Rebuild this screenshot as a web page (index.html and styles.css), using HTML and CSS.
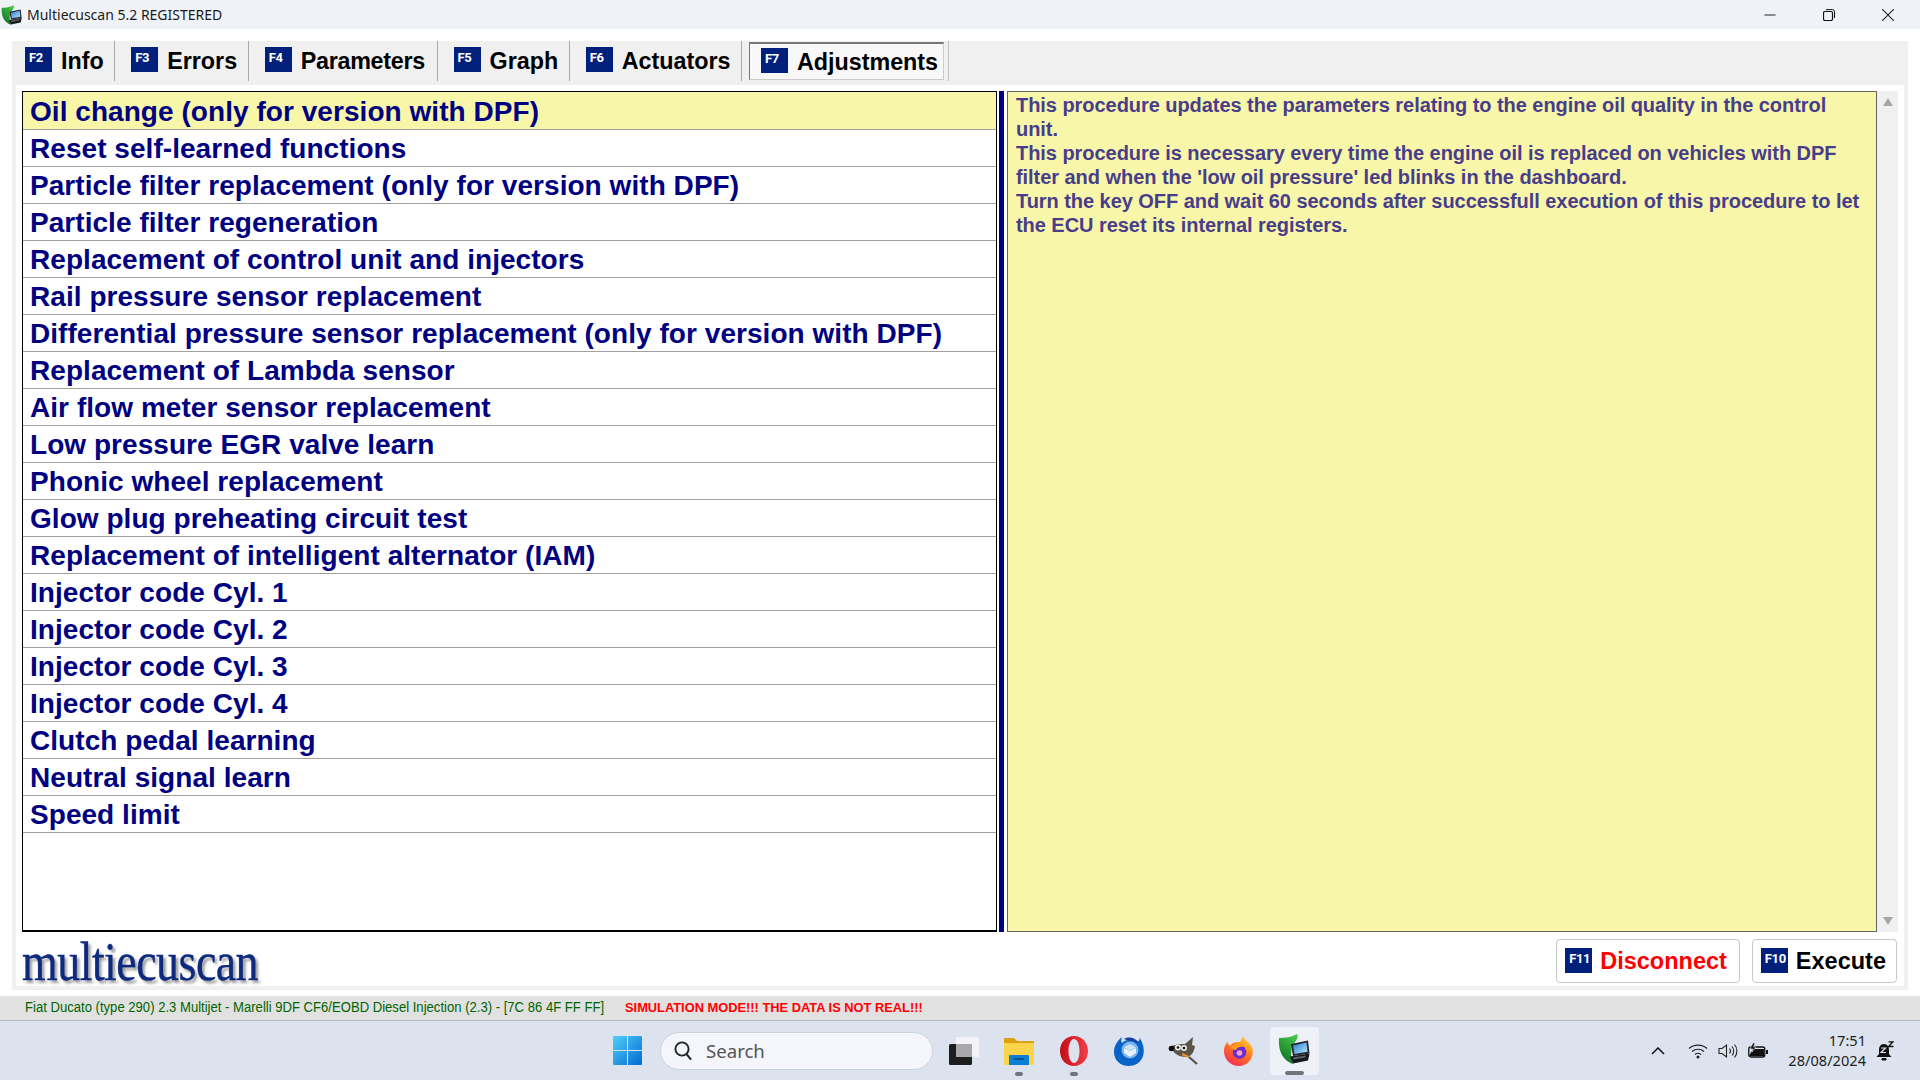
FILE: index.html
```html
<!DOCTYPE html>
<html lang="en">
<head>
<meta charset="utf-8">
<title>Multiecuscan 5.2 REGISTERED</title>
<link rel="stylesheet" href="styles.css">
</head>
<body>
<svg class="defs" width="0" height="0" aria-hidden="true">
  <defs>
    <linearGradient id="leaf" x1="0.7" y1="0" x2="0.2" y2="1"><stop offset="0" stop-color="#46c646"/><stop offset="1" stop-color="#0c6b26"/></linearGradient>
    <linearGradient id="scr" x1="0" y1="0" x2="1" y2="1"><stop offset="0" stop-color="#1f7fd0"/><stop offset="1" stop-color="#bfe6f7"/></linearGradient>
  </defs>
  <symbol id="mes" viewBox="0 0 32 30">
    <path d="M1 4C8 4 13 3 19 0 21 3 18 8 14 11L13 22 15 30C7 27 0 20 1 4Z" fill="url(#leaf)"/>
    <path d="M13 10L30 6.500 31.500 19.500 15 22Z" fill="#24272e"/>
    <path d="M15 11.500L28.500 8.500 29.500 17.800 16.500 20Z" fill="url(#scr)"/>
    <path d="M12 22.500L31.500 19.500 30 26.500 15 29.500Z" fill="#16181c"/>
    <path d="M15 23.500L28 21.500 27.500 23.500 15.500 25.500Z" fill="#5c6068"/>
  </symbol>
</svg>

<header class="titlebar">
  <svg class="title-icon"><use href="#mes"/></svg>
  <span class="title-text">Multiecuscan 5.2 REGISTERED</span>
  <div class="win-controls">
    <svg class="win-btn" viewBox="0 0 12 12"><path d="M0.500 6h11" stroke="#222" fill="none"/></svg>
    <svg class="win-btn" viewBox="0 0 12 12"><rect x="0.500" y="2.500" width="9" height="9" rx="1.500" stroke="#111" stroke-width="1.200" fill="none"/><path d="M3 0.600h6.500a2 2 0 0 1 2 2V9" stroke="#111" fill="none"/></svg>
    <svg class="win-btn" viewBox="0 0 12 12"><path d="M0 0L12 12M12 0L0 12" stroke="#222" stroke-width="1.100" fill="none"/></svg>
  </div>
</header>

<main class="frame">
  <nav class="tabs">
    <div class="tab"><span class="key">F2</span><span>Info</span></div>
    <div class="tab"><span class="key">F3</span><span>Errors</span></div>
    <div class="tab tab-tight"><span class="key">F4</span><span>Parameters</span></div>
    <div class="tab"><span class="key">F5</span><span>Graph</span></div>
    <div class="tab"><span class="key">F6</span><span>Actuators</span></div>
    <div class="tab-wrap"><div class="tab-active"><span class="key">F7</span><span>Adjustments</span></div></div>
  </nav>
  <section class="inner">
    <div class="content">
      <ul class="list">
        <li class="row selected">Oil change (only for version with DPF)</li>
        <li class="row">Reset self-learned functions</li>
        <li class="row">Particle filter replacement (only for version with DPF)</li>
        <li class="row">Particle filter regeneration</li>
        <li class="row">Replacement of control unit and injectors</li>
        <li class="row">Rail pressure sensor replacement</li>
        <li class="row">Differential pressure sensor replacement (only for version with DPF)</li>
        <li class="row">Replacement of Lambda sensor</li>
        <li class="row">Air flow meter sensor replacement</li>
        <li class="row">Low pressure EGR valve learn</li>
        <li class="row">Phonic wheel replacement</li>
        <li class="row">Glow plug preheating circuit test</li>
        <li class="row">Replacement of intelligent alternator (IAM)</li>
        <li class="row">Injector code Cyl. 1</li>
        <li class="row">Injector code Cyl. 2</li>
        <li class="row">Injector code Cyl. 3</li>
        <li class="row">Injector code Cyl. 4</li>
        <li class="row">Clutch pedal learning</li>
        <li class="row">Neutral signal learn</li>
        <li class="row">Speed limit</li>
      </ul>
      <div class="divider"></div>
      <div class="desc">This procedure updates the parameters relating to the engine oil quality in the control unit.<br>This procedure is necessary every time the engine oil is replaced on vehicles with DPF filter and when the 'low oil pressure' led blinks in the dashboard.<br>Turn the key OFF and wait 60 seconds after successfull execution of this procedure to let the ECU reset its internal registers.</div>
      <div class="scroll">
        <svg class="arrow" viewBox="0 0 10 8"><path d="M5 0L10 8H0Z" fill="#a6a6a6"/></svg>
        <svg class="arrow" viewBox="0 0 10 8"><path d="M0 0H10L5 8Z" fill="#a6a6a6"/></svg>
      </div>
    </div>
    <div class="footer">
      <div class="logo-box"><div class="logo">multiecuscan</div></div>
      <div class="btn btn-red"><span class="key">F11</span><span>Disconnect</span></div>
      <div class="btn"><span class="key">F10</span><span>Execute</span></div>
    </div>
  </section>
</main>

<div class="status">
  <span class="status-car"><span class="status-car-text">Fiat Ducato (type 290) 2.3 Multijet - Marelli 9DF CF6/EOBD Diesel Injection (2.3) - [7C 86 4F FF FF]</span></span>
  <span class="status-sim">SIMULATION MODE!!! THE DATA IS NOT REAL!!!</span>
</div>

<footer class="taskbar">
  <svg class="tb-start" viewBox="0 0 29 29">
    <defs><linearGradient id="win" x1="0" y1="0" x2="1" y2="1"><stop offset="0" stop-color="#4fd0fb"/><stop offset="1" stop-color="#0469cf"/></linearGradient></defs>
    <path d="M1 0H14V14H0V1a1 1 0 0 1 1-1ZM15 0H28a1 1 0 0 1 1 1V14H15ZM0 15H14V29H1a1 1 0 0 1-1-1ZM15 15H29V28a1 1 0 0 1-1 1H15Z" fill="url(#win)"/>
  </svg>
  <div class="search">
    <svg class="search-icon" viewBox="0 0 18 20"><circle cx="8" cy="8" r="6.600" fill="none" stroke="#222" stroke-width="1.900"/><path d="M12.600 13.200L17 18.600" stroke="#222" stroke-width="2.100" fill="none"/></svg>
    <span>Search</span>
  </div>
  <svg class="tb-view" viewBox="0 0 30 28">
    <rect x="0" y="7" width="23" height="21" rx="1.500" fill="#1d1d1f"/>
    <rect x="7" y="0" width="23" height="20" rx="1.500" fill="#f1f3f7"/>
    <rect x="7" y="7" width="16" height="13" fill="#a9a9ab"/>
  </svg>
  <div class="tb-item tb-folder">
    <svg class="tb-icon" viewBox="0 0 30 28"><path d="M0 2a1 1 0 0 1 1-1H10L13 4H30V8H0Z" fill="#dfa00e"/><path d="M0 6H29a1 1 0 0 1 1 1V27a1 1 0 0 1-1 1H1a1 1 0 0 1-1-1Z" fill="#fbd44c"/><path d="M5 19a1 1 0 0 1 1-1H24a1 1 0 0 1 1 1V28H5Z" fill="#0a7fd4"/><path d="M10 22H20" stroke="#06457e" stroke-width="1.500"/></svg>
    <i class="pin"></i>
  </div>
  <div class="tb-item tb-opera">
    <svg class="tb-icon" viewBox="0 0 30 30"><defs><linearGradient id="op" x1="0" y1="0" x2="1" y2="0"><stop offset="0" stop-color="#c40d17"/><stop offset="1" stop-color="#f0404a"/></linearGradient></defs><path fill-rule="evenodd" d="M15 0C23 0 29 6.500 29 15S23 30 15 30 1 23.500 1 15 7 0 15 0ZM15 3C11.800 3 9.500 8 9.500 15S11.800 27 15 27 20.500 22 20.500 15 18.200 3 15 3Z" fill="url(#op)"/></svg>
    <i class="pin"></i>
  </div>
  <div class="tb-item tb-bird">
    <svg class="tb-icon" viewBox="0 0 30 30"><path d="M8 1C7 4 7 5 8 7 12 3 19 3 23 6 26 4 26 3 25 1 29 6 31 14 29 20 27 27 20 30 15 30 6 30 0 24 0 16 0 10 3 5 8 1Z" fill="#0a63c9"/><path d="M10 3C15 0 22 2 25 7 19 4 13 5 10 3Z" fill="#1a3f9c"/><circle cx="16" cy="14" r="8.500" fill="#7ab8f0"/><path d="M10 12L16 15L22 12V17L16 21L10 17Z" fill="#e8f2fc"/><path d="M10 11.500L16 8L22 11.500L16 14.500Z" fill="#cfe3f8"/></svg>
  </div>
  <div class="tb-item tb-gimp">
    <svg class="tb-icon" viewBox="0 0 30 30"><path d="M2 11C7 8 12 8 17 8L25 1 24 9 27 10C26 15 24 21 18 21 12 21 7 18 5 15Z" fill="#5a5548"/><circle cx="3.500" cy="12.500" r="2.800" fill="#0c0c0c"/><circle cx="10" cy="11.500" r="3" fill="#e9e9e9"/><circle cx="16" cy="12" r="3" fill="#e9e9e9"/><circle cx="10" cy="11.500" r="1.300" fill="#111"/><circle cx="16" cy="12" r="1.300" fill="#111"/><path d="M14 18L21 21" stroke="#e8912a" stroke-width="2"/><path d="M21 21L29 28" stroke="#55504a" stroke-width="2.200"/></svg>
  </div>
  <div class="tb-item tb-fox">
    <svg class="tb-icon" viewBox="0 0 30 30"><defs><linearGradient id="fx" x1="0.800" y1="0" x2="0.200" y2="1"><stop offset="0" stop-color="#ffd83b"/><stop offset=".45" stop-color="#ff7a1a"/><stop offset="1" stop-color="#f5275a"/></linearGradient></defs><path d="M19 0C20 4 26 6 28 11 31 20 25 30 15 30 6 30 0 23 0 15 0 11 2 7 4 6 4 8 5 9 6 10 8 6 13 6 16 6 17 4 18 2 19 0Z" fill="url(#fx)"/><circle cx="15.500" cy="16" r="6.800" fill="#6a2bd0"/><path d="M6 12C10 7 17 7 21 11 17 10 13 11 12 14 10 14 8 13 6 12Z" fill="#ff9a1f"/><circle cx="15.500" cy="17" r="2.800" fill="#f6a0c8"/></svg>
  </div>
  <div class="tb-active">
    <svg class="tb-mes"><use href="#mes"/></svg>
    <i class="pin pin-wide"></i>
  </div>

  <div class="tray">
    <svg class="tray-chevron" viewBox="0 0 14 8"><path d="M1 7L7 1L13 7" stroke="#111" stroke-width="1.500" fill="none"/></svg>
    <svg class="tray-icon tray-wifi" viewBox="0 0 20 16"><path d="M1 5.500C6 1 14 1 19 5.500M4 8.500C7.500 5.500 12.500 5.500 16 8.500M7 11.500C8.800 10 11.200 10 13 11.500" stroke="#222" stroke-width="1.200" fill="none"/><circle cx="10" cy="14" r="1.500" fill="#222"/></svg>
    <svg class="tray-icon" viewBox="0 0 20 16"><path d="M1 5.500H4L8.500 2V14L4 10.500H1Z" stroke="#222" stroke-width="1.100" fill="none"/><path d="M11.500 5.500C12.800 7 12.800 9 11.500 10.500M14 3.500C16.300 6 16.300 10 14 12.500M16.500 1.500C19.700 5 19.700 11 16.500 14.500" stroke="#222" stroke-width="1.100" fill="none"/></svg>
    <svg class="tray-icon" viewBox="0 0 20 16"><rect x="0.800" y="4" width="16" height="10" rx="2" fill="none" stroke="#111" stroke-width="1.300"/><path d="M1 13L5 6H16V13Z" fill="#111"/><rect x="18" y="7" width="2" height="4" fill="#111"/><path d="M5 0L2 6H5L4 9L8 4H5.500L7 0Z" fill="#111" stroke="#dde3ee" stroke-width=".600"/></svg>
    <div class="clock"><span>17:51</span><span>28/08/2024</span></div>
    <svg class="tray-bell" viewBox="0 0 18 20"><path d="M8 3C11.500 3 13 6 13 9V13L15.500 16H0.500L3 13V9C3 6 4.500 3 8 3Z" fill="#111"/><rect x="5.500" y="17" width="5" height="2.500" rx="1.200" fill="#111"/><path d="M5 7H9.500L5 11.500H10" stroke="#dde3ee" stroke-width="1.200" fill="none"/><path d="M12.500 0.800H17L12.500 5.500H17.500" stroke="#111" stroke-width="1.300" fill="none"/></svg>
  </div>
</footer>
</body>
</html>
```
FILE: styles.css
```css
* { box-sizing: border-box; }
html, body { margin: 0; padding: 0; }
body {
  width: 1920px;
  height: 1080px;
  overflow: hidden;
  background: #fff;
  display: flex;
  flex-direction: column;
  font-family: "Liberation Sans", Arial, sans-serif;
}
.defs { display: block; height: 0; }

/* title bar */
.titlebar {
  height: 29px;
  background: #eff3f8;
  display: flex;
  align-items: center;
  flex: none;
}
.title-icon { width: 21px; height: 20px; margin-left: 1px; }
.title-text {
  margin-left: 5px;
  font-family: "Noto Sans", sans-serif;
  font-size: 14px;
  color: #1a1a1a;
  white-space: nowrap;
}
.win-controls {
  margin-left: auto;
  display: flex;
  gap: 47px;
  padding-right: 26px;
}
.win-btn { width: 12px; height: 12px; }

/* application frame */
.frame {
  flex: none;
  margin: 12px 12px 0;
  width: 1896px;
  height: 949px;
  background: #f0f0f0;
  display: flex;
  flex-direction: column;
}
.tabs {
  height: 44px;
  flex: none;
  display: flex;
  align-items: flex-start;
  font-size: 23.3px;
  font-weight: 700;
  color: #000;
}
.tab {
  height: 40px;
  display: flex;
  align-items: center;
  gap: 9px;
  padding: 0 10.5px 0 16px;
  border-right: 1px solid #a8a8a8;
  white-space: nowrap;
}
.tab:first-child { padding-left: 13px; }
.tab .key { margin-bottom: 3px; }
.tab-tight { letter-spacing: -0.25px; padding-right: 11.5px; }
.tab-wrap {
  padding: 1px 4px 0 7px;
  height: 40px;
  border-right: 1px solid #c0c0c0;
}
.tab-active {
  width: 195px;
  height: 38px;
  display: flex;
  align-items: center;
  gap: 9px;
  padding: 1px 0 0 11px;
  background: #f8f8f8;
  border: 1px solid;
  border-color: #777 #ccc #ccc #777;
  border-width: 2px 1px 1px 1px;
  white-space: nowrap;
}
.tab-active .key { margin-bottom: 3px; }
.key {
  width: 27px;
  height: 25px;
  flex: none;
  background: #00207b;
  color: #fff;
  font-family: "Roboto", "Liberation Sans", sans-serif;
  font-size: 13px;
  font-weight: 700;
  line-height: 21px;
  letter-spacing: -0.4px;
  padding-left: 4px;
}

.inner {
  flex: 1;
  margin: 0 4px 4px;
  background: #fff;
  display: flex;
  flex-direction: column;
  min-height: 0;
}
.content {
  height: 841px;
  flex: none;
  margin: 6px 6px 0;
  display: flex;
}
.list {
  list-style: none;
  margin: 0;
  padding: 0;
  width: 976px;
  border: 1px solid #000;
  border-bottom-width: 2px;
  font-size: 28px;
  font-weight: 700;
  letter-spacing: 0.05px;
  color: #000080;
}
.row {
  height: 37px;
  line-height: 38px;
  padding-left: 7px;
  border-bottom: 1px solid #a0a0a0;
  white-space: nowrap;
}
.row.selected {
  height: 38px;
  line-height: 40px;
  background: #f8f6a8;
}
.divider {
  width: 5px;
  background: #000080;
  margin-left: 2px;
  flex: none;
}
.desc {
  width: 870px;
  margin-left: 3px;
  flex: none;
  background: #f8f6a8;
  border: 1px solid #666;
  padding: 1px 8px 0 8px;
  font-size: 20px;
  line-height: 24px;
  font-weight: 700;
  letter-spacing: -0.05px;
  color: #483d8b;
}
.scroll {
  width: 21px;
  flex: none;
  background: #f0f0f0;
  display: flex;
  flex-direction: column;
  justify-content: space-between;
  align-items: center;
  padding: 7px 0;
}
.arrow { width: 10px; height: 8px; }

.footer {
  flex: 1;
  display: flex;
  align-items: flex-start;
  gap: 12px;
  padding: 7px 7px 0 6px;
}
.logo-box { margin-right: auto; width: 240px; }
.logo {
  font-family: "Liberation Serif", serif;
  font-size: 54px;
  line-height: 46px;
  letter-spacing: -0.6px;
  color: #0d2a7e;
  -webkit-text-stroke: 0.4px #0d2a7e;
  text-shadow: 3px 3px 3px rgba(0, 0, 0, .4);
  white-space: nowrap;
  transform: scaleX(.85);
  transform-origin: left center;
}
.btn {
  height: 44px;
  display: flex;
  align-items: center;
  gap: 8px;
  padding: 0 10px 0 8px;
  border: 1px solid #c8c8c8;
  border-radius: 4px;
  background: #fff;
  font-size: 23.5px;
  font-weight: 700;
  color: #000;
}
.btn .key { margin-bottom: 1px; }
.btn-red { color: #ff0000; padding-right: 12px; }

/* status line */
.status {
  flex: none;
  margin-top: 6px;
  height: 25px;
  background: #e1e1e1;
  border-bottom: 1px solid #b8bcc4;
  padding-left: 25px;
  display: flex;
  font-size: 14px;
  line-height: 23px;
  white-space: nowrap;
}
.status-car { color: #006400; width: 600px; flex: none; }
.status-car-text {
  display: inline-block;
  transform: scaleX(.935);
  transform-origin: left center;
}
.status-sim { color: #ff0000; font-weight: 700; font-size: 12.85px; line-height: 24px; }

/* taskbar */
.taskbar {
  flex: 1;
  background: #dde3ee;
  display: flex;
  align-items: center;
  padding-left: 613px;
}
.tb-start { width: 29px; height: 29px; flex: none; }
.search {
  margin-left: 18px;
  width: 273px;
  height: 38px;
  flex: none;
  background: #f4f6fb;
  border: 1px solid #ccd2de;
  border-radius: 19px;
  display: flex;
  align-items: center;
  padding-left: 13px;
  gap: 14px;
  font-family: "Noto Sans", sans-serif;
  font-size: 18.6px;
  color: #555;
}
.search-icon { width: 18px; height: 20px; }
.tb-view { width: 30px; height: 28px; margin-left: 16px; flex: none; }
.tb-item {
  position: relative;
  flex: none;
  width: 30px;
  height: 30px;
}
.tb-icon { width: 30px; height: 30px; display: block; }
.tb-folder { margin-left: 25px; }
.tb-opera { margin-left: 25px; }
.tb-bird { margin-left: 25px; }
.tb-gimp { margin-left: 24px; }
.tb-fox { margin-left: 26px; }
.pin {
  position: absolute;
  left: 11px;
  bottom: -10px;
  width: 8px;
  height: 4px;
  border-radius: 2px;
  background: #70757d;
}
.tb-active {
  position: relative;
  margin-left: 16px;
  width: 49px;
  height: 48px;
  flex: none;
  background: #eef1f7;
  border-radius: 4px;
  display: flex;
  align-items: center;
  justify-content: center;
}
.tb-mes { width: 32px; height: 30px; margin-bottom: 3px; margin-right: 2px; }
.pin-wide { left: 15px; bottom: 0; width: 19px; }

.tray {
  margin-left: 332px;
  display: flex;
  align-items: center;
  flex: none;
}
.tray-chevron { width: 14px; height: 8px; }
.tray-icon { width: 20px; height: 16px; margin-left: 10px; }
.tray-wifi { margin-left: 23px; }
.clock {
  width: 98px;
  margin-bottom: 2px;
  display: flex;
  flex-direction: column;
  align-items: flex-end;
  font-family: "Noto Sans", sans-serif;
  font-size: 14.6px;
  line-height: 20px;
  color: #222;
}
.tray-bell { width: 18px; height: 20px; margin-left: 10px; }
```
